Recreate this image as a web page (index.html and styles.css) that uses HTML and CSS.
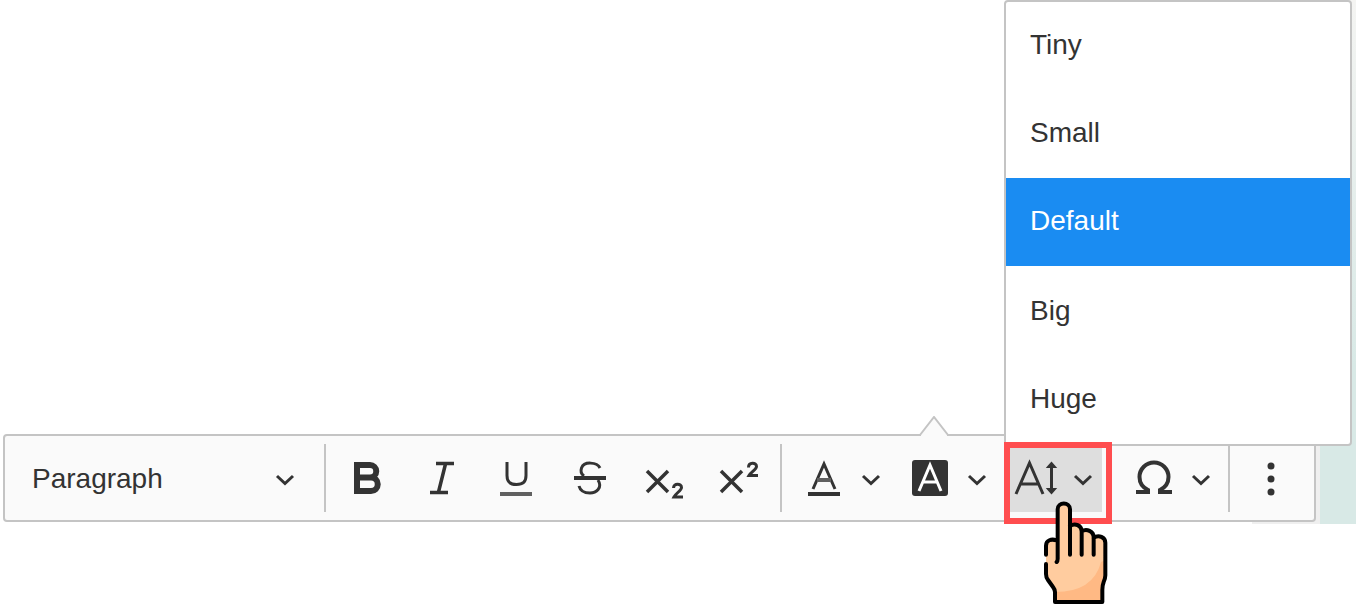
FILE: index.html
```html
<!DOCTYPE html>
<html lang="en">
<head>
<meta charset="utf-8">
<title>Editor toolbar</title>
<link rel="stylesheet" href="styles.css">
</head>
<body>
<svg class="defs" aria-hidden="true">
  <symbol id="chevron" viewBox="0 0 20 20"><path d="M2 8l8 7.500 8-7.500"/></symbol>
</svg>
<main class="editor">
  <div class="backdrop" aria-hidden="true"></div>
  <div class="content"></div>
  <div class="toolbar" role="toolbar" aria-label="Formatting">
    <label class="heading">
      <select aria-label="Heading"><option>Paragraph</option></select>
      <svg class="chevron"><use href="#chevron"/></svg>
    </label>
    <span class="separator"></span>
    <div class="group">
      <button class="tool" aria-label="Bold"><svg class="icon" viewBox="0 0 48 40"><path stroke-width="6" d="M13 7H26a5.500 5.500 0 0 1 0 12.500H13zM13 19.500H27a6.500 6.500 0 0 1 0 13.500H13z"/></svg></button>
      <button class="tool" aria-label="Italic"><svg class="icon" viewBox="0 0 48 40"><path stroke-width="3.500" d="M18 5.500H36M12 34.500H30M27.500 6L20.500 34"/></svg></button>
      <button class="tool" aria-label="Underline"><svg class="icon" viewBox="0 0 48 40"><path d="M15 4V17.500C15 24 18 26.500 24.500 26.500S34 24 34 17.500V4"/><path class="soft" d="M8 36H40"/></svg></button>
      <button class="tool" aria-label="Strikethrough"><svg class="icon" viewBox="0 0 48 40"><path d="M34 10C31 4 18 3 15.500 10C14.500 13 15 16 18 18M32 22C37 30 30 35 24 35C18 35 14 32 13 28"/><path stroke-width="4" d="M8 20H40"/></svg></button>
      <button class="tool" aria-label="Subscript"><svg class="icon" viewBox="0 0 48 40"><path stroke-width="3.500" d="M7 13L28 34M28 13L7 34"/><path d="M33.500 30C33.500 25 41.500 25 41.500 29.500C41.500 32.500 36 35 34 39H43"/></svg></button>
      <button class="tool" aria-label="Superscript"><svg class="icon" viewBox="0 0 48 40"><path stroke-width="3.500" d="M7 13L28 34M28 13L7 34"/><path d="M34.500 9.500C34.500 4 42.500 4 42.500 8.500C42.500 11.500 37 14 35 17.500H44"/></svg></button>
    </div>
    <span class="separator"></span>
    <div class="group pickers">
      <div class="picker">
        <button class="split" aria-label="Font color"><svg class="icon" viewBox="0 0 48 40"><path d="M13 31L24 6L35 31"/><path class="soft" d="M17 22H31"/><path stroke-width="4" d="M8 36H40"/></svg><svg class="chevron"><use href="#chevron"/></svg></button>
      </div>
      <div class="picker">
        <svg class="pointer" viewBox="0 0 30 20" aria-hidden="true"><path d="M1 20V19L15 1L29 19V20"/></svg>
        <button class="split" aria-label="Font background color"><svg class="icon" viewBox="0 0 48 40"><rect class="tile" x="6" y="2" width="36" height="36" rx="3"/><path class="light" d="M13 33L24 7L35 33M17 24H31"/></svg><svg class="chevron"><use href="#chevron"/></svg></button>
      </div>
      <div class="picker">
        <button class="split active" aria-label="Font size" aria-haspopup="true" aria-expanded="true"><svg class="icon" viewBox="0 0 48 40"><path d="M4 36L17.500 5L31 36M9 26H26M39.500 6V34"/><path stroke-width="2" class="solid" d="M36 9L39.500 5L43 9zM36 31L39.500 35L43 31z"/></svg><svg class="chevron"><use href="#chevron"/></svg></button>
        <div class="menu" role="menu" aria-label="Font size">
          <button role="menuitemradio" aria-checked="false">Tiny</button>
          <button role="menuitemradio" aria-checked="false">Small</button>
          <button role="menuitemradio" aria-checked="true">Default</button>
          <button role="menuitemradio" aria-checked="false">Big</button>
          <button role="menuitemradio" aria-checked="false">Huge</button>
        </div>
        <span class="highlight"></span>
        <svg class="hand" viewBox="159 213 198 309" aria-hidden="true">
          <path class="skin" d="M203 235Q203 221 221 221T240 235V292Q257 276 275 305Q292 290 311 325Q346 306 346 340V440L337 480V516H195V485L168 440V345Q170 328 203 331z"/>
          <path class="shade" d="M346 390V440L337 480V516H195V486Q310 486 333 396z"/>
          <path class="outline" d="M200 396Q203 393 203 386V238C203 215 240 215 240 238V374M240 288C255 278 275 286 275 304V374M275 304C290 294 311 304 311 322V374M311 324C326 312 346 322 346 338V436Q346 445 341 456Q337 466 337 480V516H195V486Q195 479 189 471L174 450Q168 442 168 432V402M168 374V347C168 330 185 326 199 331"/>
        </svg>
      </div>
    </div>
    <div class="picker special">
      <button class="split" aria-label="Special characters"><svg class="icon" viewBox="0 0 48 40"><path stroke-width="4" d="M6 34H18V32C12 29 9.500 24 9.500 19A14.500 14.500 0 0 1 38.500 19C38.500 24 36 29 30 32V34H42"/></svg><svg class="chevron"><use href="#chevron"/></svg></button>
    </div>
    <span class="separator"></span>
    <button class="more" aria-label="Show more items"><svg class="icon" viewBox="0 0 48 40"><g class="dots"><circle cx="23" cy="8" r="3.500"/><circle cx="23" cy="21" r="3.500"/><circle cx="23" cy="34" r="3.500"/></g></svg></button>
  </div>
</main>
</body>
</html>
```
FILE: styles.css
```css
* {
  box-sizing: border-box;
}

body {
  min-height: 100vh;
  margin: 0;
  background: #fff;
  color: #333;
  font-family: "Liberation Sans", Arial, sans-serif;
  font-size: 28px;
  line-height: 32px;
}

button,
select {
  margin: 0;
  padding: 0;
  border: 0;
  background: none;
  color: inherit;
  font: inherit;
}

.defs {
  position: absolute;
  width: 0;
  height: 0;
}

.editor {
  position: relative;
}

.backdrop {
  position: absolute;
  top: 0;
  right: 0;
  bottom: -2px;
  width: 104px;
  border-left: 68px solid #efefef;
  background: linear-gradient(#f4f4f2, #d8e9e6 70%);
}

.content {
  min-height: 434px;
}

.toolbar {
  position: relative;
  display: flex;
  align-items: center;
  margin: 0 40px 0 3px;
  border: 2px solid #c4c4c4;
  border-radius: 4px;
  background: #fafafa;
}

.heading {
  display: grid;
  flex: 1;
  align-items: center;
  min-width: 220px;
}

.heading select {
  grid-area: 1 / 1;
  width: 100%;
  height: 68px;
  padding: 2px 0 0 27px;
  appearance: none;
}

.heading .chevron {
  grid-area: 1 / 1;
  justify-self: end;
  margin-right: 29px;
  pointer-events: none;
}

.separator {
  width: 2px;
  height: 68px;
  background: #c4c4c4;
}

.group {
  display: flex;
  align-items: center;
  padding: 0 5px;
}

.pickers {
  padding: 0 0 0 10px;
}

.tool {
  display: grid;
  place-items: center;
  width: 74px;
  height: 68px;
}

.picker {
  position: relative;
  display: flex;
  align-items: center;
  width: 106px;
  height: 84px;
}

.special {
  margin-left: 12px;
}

.split {
  display: grid;
  grid-template-columns: 64px 30px;
  place-items: center;
  width: 98px;
  height: 68px;
}

.active {
  background: #dedede;
}

.more {
  display: grid;
  place-items: center;
  width: 84px;
  height: 84px;
}

.icon,
.chevron {
  display: block;
  overflow: visible;
  fill: none;
  stroke: #333;
  stroke-width: 3px;
}

.icon {
  width: 48px;
  height: 40px;
}

.chevron {
  width: 20px;
  height: 20px;
}

.soft {
  stroke: #606060;
  stroke-width: 4px;
}

.tile,
.dots,
.solid {
  fill: #333;
}

.tile,
.dots {
  stroke: none;
}

.light {
  stroke: #fff;
}

.pointer {
  position: absolute;
  bottom: 100%;
  left: 21px;
  width: 30px;
  height: 20px;
  fill: #fafafa;
  stroke: #c4c4c4;
  stroke-width: 2px;
}

.menu {
  position: absolute;
  bottom: 74px;
  left: 0;
  z-index: 1;
  display: flex;
  flex-direction: column;
  width: 348px;
  border: 2px solid #c4c4c4;
  border-radius: 4px;
  background: #fff;
}

.menu button {
  height: 88px;
  padding: 0 24px 2px;
  text-align: left;
}

.menu [aria-checked="true"] {
  margin-bottom: 2px;
  background: #1a8cf2;
  color: #fff;
}

.highlight {
  position: absolute;
  top: 6px;
  left: 0;
  z-index: 2;
  width: 108px;
  height: 82px;
  border: 6px solid #ff4d4f;
  pointer-events: none;
}

.hand {
  position: absolute;
  top: 65px;
  left: 39px;
  z-index: 3;
  width: 66px;
  height: 103px;
  pointer-events: none;
}

.skin {
  fill: #ffcc9f;
}

.shade {
  fill: #ffb984;
}

.outline {
  fill: none;
  stroke: #000;
  stroke-width: 12px;
  stroke-linecap: round;
  stroke-linejoin: round;
}
```
